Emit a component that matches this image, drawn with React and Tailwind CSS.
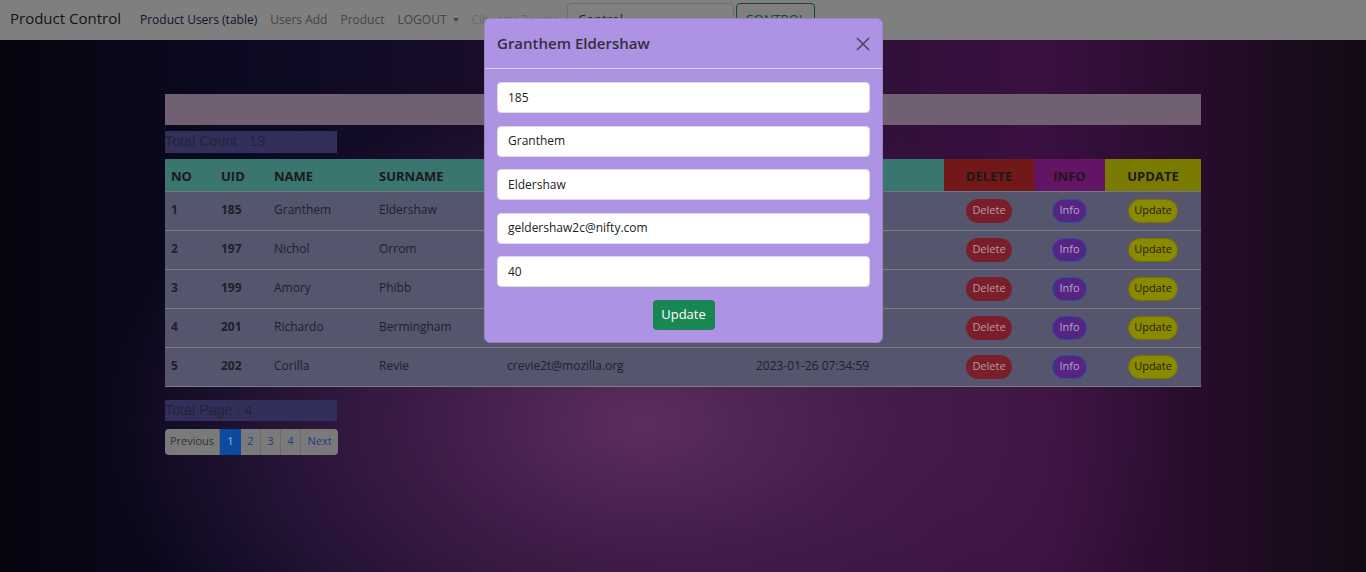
import React from "react";

const rows = [
  { no: 1, uid: 185, name: "Granthem", surname: "Eldershaw", email: "geldershaw2c@nifty.com", date: "2023-01-26 07:34:59" },
  { no: 2, uid: 197, name: "Nichol", surname: "Orrom", email: "norrom2k@wired.com", date: "2023-01-26 07:34:59" },
  { no: 3, uid: 199, name: "Amory", surname: "Phibb", email: "aphibb2m@about.me", date: "2023-01-26 07:34:59" },
  { no: 4, uid: 201, name: "Richardo", surname: "Bermingham", email: "rbermingham2o@hc360.com", date: "2023-01-26 07:34:59" },
  { no: 5, uid: 202, name: "Corilla", surname: "Revie", email: "crevie2t@mozilla.org", date: "2023-01-26 07:34:59" },
];

const font = { fontFamily: '"Open Sans", "Noto Sans", sans-serif' };
const arial = { fontFamily: '"Liberation Sans", Arial, sans-serif' };

function Navbar() {
  return (
    <nav className="h-[40px] bg-[#7f7f7f] flex items-center pl-[10px] text-[12px]" style={font}>
      <span className="text-[15px] text-[#141414] mr-[19px] pb-[3px]">Product Control</span>
      <div className="flex items-center gap-[13px] pb-[1px]">
        <span className="text-[#10122a]">Product Users (table)</span>
        <span className="text-[#4a3f4c]">Users Add</span>
        <span className="text-[#444]">Product</span>
        <span className="text-[#444] flex items-center gap-[6px]">
          LOGOUT
          <span className="inline-block w-0 h-0 border-l-[3px] border-r-[3px] border-t-[4px] border-l-transparent border-r-transparent border-t-[#444]" />
        </span>
        <span className="text-[#6a6a6a]">Cihangir Zengin</span>
      </div>
      <div className="ml-[8px] h-[34px] w-[167px] rounded-[4px] border border-[#6e6e6e] bg-[#808080] flex items-center px-[10px] text-[13px] text-[#222]">
        Control
      </div>
      <div className="ml-[2px] h-[34px] w-[79px] rounded-[4px] border border-[#0e4a30] flex items-center justify-center text-[13px] text-[#0e4a30]">
        CONTROL
      </div>
    </nav>
  );
}

function Pill({ className, children }) {
  return (
    <span className={"inline-flex items-center justify-center h-[24px] rounded-full text-[11px] " + className}>
      {children}
    </span>
  );
}

function Table() {
  const td = "pl-[6px] pb-[2px]";
  const th = "bg-[#3a7570] text-left pl-[6px] pt-[3px]";
  return (
    <table className="w-[1036px] table-fixed border-collapse text-[12px]" style={font}>
      <colgroup>
        <col className="w-[50px]" />
        <col className="w-[53px]" />
        <col className="w-[105px]" />
        <col className="w-[128px]" />
        <col className="w-[249px]" />
        <col className="w-[194px]" />
        <col className="w-[90px]" />
        <col className="w-[71px]" />
        <col className="w-[96px]" />
      </colgroup>
      <thead>
        <tr className="h-[32px] text-[13px] font-bold text-[#1a1a1a] border-b border-[#6f7a80]">
          <th className={th}>NO</th>
          <th className={th}>UID</th>
          <th className={th}>NAME</th>
          <th className={th}>SURNAME</th>
          <th className={th}>EMAIL</th>
          <th className={th}>DATE</th>
          <th className="bg-[#721818] text-center pt-[3px]">DELETE</th>
          <th className="bg-[#641464] text-center pt-[3px]">INFO</th>
          <th className="bg-[#7a7a00] text-center pt-[3px]">UPDATE</th>
        </tr>
      </thead>
      <tbody>
        {rows.map((r) => (
          <tr key={r.no} className="h-[39px] bg-[#55556e] text-[#1f1f2a] border-b border-[#7c7c88]">
            <td className={td + " font-bold"}>{r.no}</td>
            <td className={td + " font-bold"}>{r.uid}</td>
            <td className={td}>{r.name}</td>
            <td className={td}>{r.surname}</td>
            <td className={td}>{r.email}</td>
            <td className={td}>{r.date}</td>
            <td className="text-center">
              <Pill className="w-[46px] bg-[#7a1f2a] text-[#b99aa2]">Delete</Pill>
            </td>
            <td className="text-center">
              <Pill className="w-[35px] bg-[#562583] border border-[#2f4d9c] text-[#b9a6cc]">Info</Pill>
            </td>
            <td className="text-center">
              <Pill className="w-[50px] bg-[#8a8a00] border border-[#7a6e00] text-[#1e1e10]">Update</Pill>
            </td>
          </tr>
        ))}
      </tbody>
    </table>
  );
}

function Pagination() {
  const base = "h-full flex items-center justify-center border-r border-[#6c6c6c]";
  return (
    <div className="flex h-[26px] w-[173px] rounded-[4px] overflow-hidden bg-[#7a7a7a] text-[11px]" style={font}>
      <span className={base + " w-[55px] text-[#333]"}>Previous</span>
      <span className="h-full flex items-center justify-center w-[21px] bg-[#0b4a9e] text-[#a8b8d8]">1</span>
      <span className={base + " w-[20px] text-[#1a3c8a]"}>2</span>
      <span className={base + " w-[20px] text-[#1a3c8a]"}>3</span>
      <span className={base + " w-[20px] text-[#1a3c8a]"}>4</span>
      <span className="h-full flex items-center justify-center flex-1 text-[#1a3c8a]">Next</span>
    </div>
  );
}

function Modal() {
  const inputs = ["185", "Granthem", "Eldershaw", "geldershaw2c@nifty.com", "40"];
  return (
    <div className="absolute left-[484px] top-[18px] w-[399px] rounded-[6px] bg-[#ae92e4] border border-[#9a84c8]" style={font}>
      <div className="h-[50px] flex items-center justify-between pl-[12px] pr-[11px] border-b border-[#ddd2f2]">
        <span className="text-[15px] font-semibold text-[#33303d]">Granthem Eldershaw</span>
        <svg width="16" height="16" viewBox="0 0 16 16" className="text-[#4d4660]">
          <path d="M2 2 L14 14 M14 2 L2 14" stroke="currentColor" strokeWidth="1.6" fill="none" />
        </svg>
      </div>
      <div className="px-[12px] pt-[13px] pb-[12px] flex flex-col">
        <div className="flex flex-col gap-[12.5px]">
          {inputs.map((v, i) => (
            <div key={i} className="h-[31px] rounded-[4px] bg-white border border-[#dcdce2] flex items-center px-[10px] text-[12px] text-[#222]">
              {v}
            </div>
          ))}
        </div>
        <div className="flex justify-center mt-[13px]">
          <span className="h-[30px] w-[62px] rounded-[4px] bg-[#198754] text-white text-[13px] flex items-center justify-center">
            Update
          </span>
        </div>
      </div>
    </div>
  );
}

export default function App() {
  return (
    <div className="relative w-[1366px] h-[572px] overflow-hidden bg-[radial-gradient(ellipse_50%_70%_at_47%_74%,rgba(98,48,98,0.9)_0%,rgba(82,36,88,0.6)_35%,rgba(60,20,70,0)_80%),linear-gradient(90deg,#05050f_0%,#0c0a22_18%,#24102f_50%,#3a1040_76%,#120a14_100%)]">
      <Navbar />
      <div className="pl-[165px] pt-[54px]">
        <div className="w-[1036px] h-[31px] bg-[#716072]" />
        <div className="mt-[6px] w-[172px] h-[22px] bg-[#322f5a] text-[14.3px] text-[#24233a] leading-[21px]" style={arial}>
          Total Count : 19
        </div>
        <div className="mt-[6px]">
          <Table />
        </div>
        <div className="mt-[13px] w-[172px] h-[21px] bg-[#322f5a] text-[14.3px] text-[#24233a] leading-[20px]" style={arial}>
          Total Page : 4
        </div>
        <div className="mt-[8px]">
          <Pagination />
        </div>
      </div>
      <Modal />
    </div>
  );
}
